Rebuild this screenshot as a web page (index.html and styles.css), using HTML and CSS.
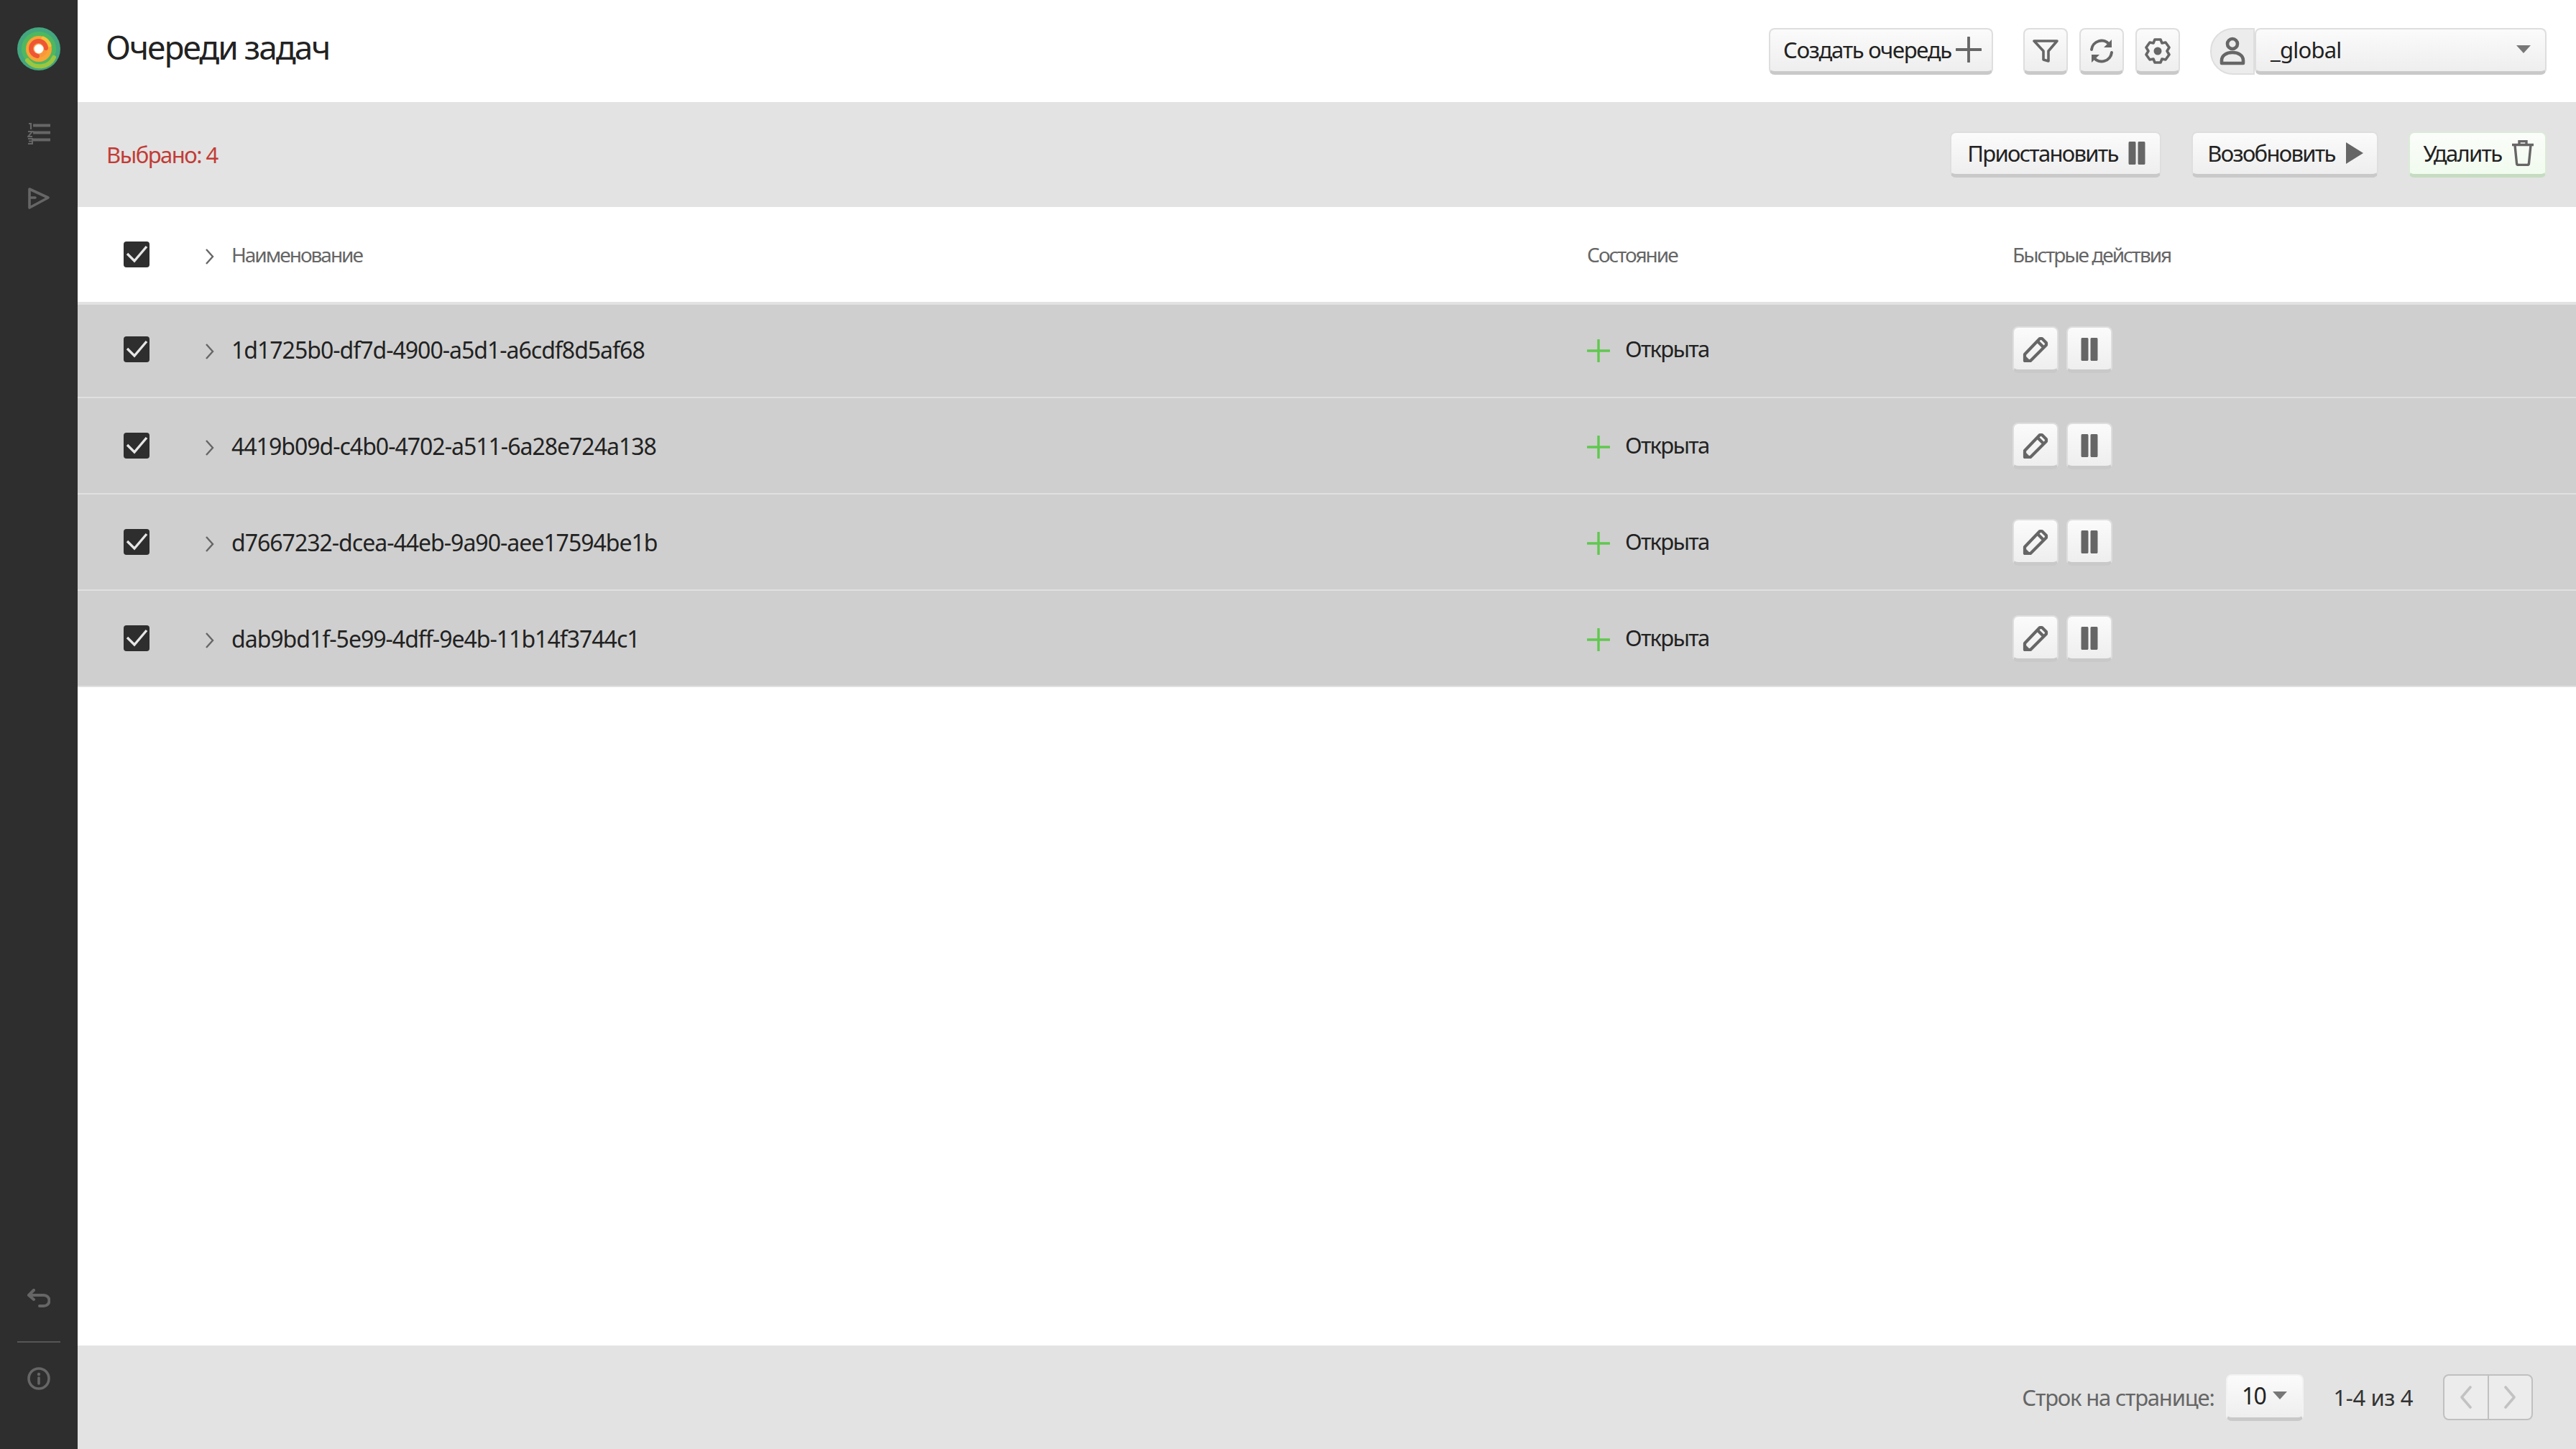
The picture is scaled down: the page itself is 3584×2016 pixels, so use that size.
FILE: index.html
```html
<!DOCTYPE html>
<html>
<head>
    <title>Очереди задач</title>
    <link rel="stylesheet" href="styles.css">
</head>
<body>
    <svg class="sprite" width="0" height="0">
        <symbol id="i-pause" viewBox="0 0 24 32"><rect x="1" y="0" width="9" height="32" rx="1.5"/><rect x="14" y="0" width="9" height="32" rx="1.5"/></symbol>
        <symbol id="i-edit" viewBox="0 0 36 36"><path d="M3 34V25L24 3h3l6 6v3L11 34z" fill="none" stroke-width="4.200" stroke-linejoin="round"/><path d="M3 34v-8l8 8z" stroke="none"/><path d="M21 7l8 8" fill="none" stroke-width="4.200"/></symbol>
        <symbol id="i-chevron" viewBox="0 0 14 22"><path d="M2 1l9 10-9 10" fill="none" stroke-width="2.400"/></symbol>
        <symbol id="i-check" viewBox="0 0 36 36"><rect width="36" height="36" rx="4" fill="#2e2e2e"/><path d="M5 17l10 10L32 7" fill="none" stroke="#e6e6e6" stroke-width="3.400"/></symbol>
        <symbol id="i-plus" viewBox="0 0 32 32"><path d="M16 1v30M1 16h30" fill="none" stroke-width="3.400" stroke-linecap="round"/></symbol>
    </svg>

    <div class="app">
        <nav class="sidebar">
            <svg class="logo" viewBox="0 0 60 60">
                <circle cx="30" cy="30" r="30" fill="#43a67f"/>
                <circle cx="30" cy="30" r="24" fill="#4fb85f"/>
                <path d="M14 46a22 22 0 0 0 37-4" fill="none" stroke="#9cc63f" stroke-width="6" stroke-linecap="round"/>
                <circle cx="30" cy="30" r="18" fill="#f7a535"/>
                <path d="M36 15a16 16 0 0 1 9 10" fill="none" stroke="#f6c33a" stroke-width="5" stroke-linecap="round"/>
                <circle cx="30" cy="30" r="12" fill="#f9973a"/>
                <path d="M28 40a10.500 10.500 0 1 1 12-11" fill="none" stroke="#ee5635" stroke-width="6" stroke-linecap="round"/>
                <circle cx="30" cy="30" r="6.500" fill="#fff"/>
            </svg>
            <svg class="nav-icon nav-list" viewBox="0 0 32 32">
                <path d="M2 2h3v8M8 2" fill="none" stroke-width="2.200"/>
                <path d="M1 13h6l-6 7h6M1 23h6v7H1M2 26.500h5" fill="none" stroke-width="2"/>
                <path d="M8 4.500h24M8 14.500h24M8 24.500h24" fill="none" stroke-width="4"/>
            </svg>
            <svg class="nav-icon nav-send" viewBox="0 0 32 32">
                <path d="M3 3l26 12L3 29z M3 15h8" fill="none" stroke-width="3.600" stroke-linejoin="round" stroke-linecap="round"/>
            </svg>
            <div class="sidebar-bottom">
                <svg class="nav-icon nav-back" viewBox="0 0 32 26">
                    <path d="M9 2L2 9l7 6M2 9h21a7 7 0 0 1 0 15h-6" fill="none" stroke-width="4" stroke-linecap="round" stroke-linejoin="round"/>
                </svg>
                <div class="sidebar-line"></div>
                <svg class="nav-icon nav-info" viewBox="0 0 32 32">
                    <circle cx="16" cy="16" r="14" fill="none" stroke-width="3.600"/>
                    <circle cx="16" cy="10" r="2.200" stroke="none"/>
                    <path d="M16 15v8" fill="none" stroke-width="3.600" stroke-linecap="round"/>
                </svg>
            </div>
        </nav>

        <main class="main">
            <header class="header">
                <h1 class="title">Очереди задач</h1>
                <div class="header-actions">
                    <button class="btn btn-create">Создать очередь
                        <svg class="btn-plus"><use href="#i-plus"/></svg>
                    </button>
                    <div class="icon-group">
                        <button class="btn btn-icon">
                            <svg viewBox="0 0 36 36" class="ico"><path d="M2 4h32L22 18v14l-7-2V18z" fill="none" stroke-width="3.600" stroke-linejoin="round"/></svg>
                        </button>
                        <button class="btn btn-icon">
                            <svg viewBox="0 0 36 36" class="ico">
                                <path d="M4 16a14 14 0 0 1 25-7M32 20a14 14 0 0 1-25 7" fill="none" stroke-width="4" stroke-linecap="round"/>
                                <path d="M32 2v11H21zM4 34V23h11z" stroke="none"/>
                            </svg>
                        </button>
                        <button class="btn btn-icon">
                            <svg viewBox="0 0 36 36" class="ico">
                                <path d="M14 2h8l2 5 5-1 5 7-3 5 3 5-5 7-5-1-2 5h-8l-2-5-5 1-5-7 3-5-3-5 5-7 5 1z" fill="none" stroke-width="3.600" stroke-linejoin="round"/>
                                <circle cx="18" cy="18" r="5.500" stroke="none"/>
                            </svg>
                        </button>
                    </div>
                    <div class="namespace">
                        <span class="namespace-user">
                            <svg viewBox="0 0 36 40" class="ico-user">
                                <circle cx="18" cy="10" r="7" fill="none" stroke-width="4.600"/>
                                <path d="M3 37v-4c0-7 7-11 15-11s15 4 15 11v4z" fill="none" stroke-width="4.600" stroke-linejoin="round"/>
                            </svg>
                        </span>
                        <div class="btn namespace-select">
                            <span>_global</span>
                            <span class="caret"></span>
                        </div>
                    </div>
                </div>
            </header>

            <section class="toolbar">
                <span class="selected-count">Выбрано: 4</span>
                <div class="toolbar-actions">
                    <button class="btn btn-tool btn-pause">Приостановить
                        <svg class="ico-pause"><use href="#i-pause"/></svg>
                    </button>
                    <button class="btn btn-tool btn-resume">Возобновить
                        <svg viewBox="0 0 26 32" class="ico-play"><path d="M1 1l24 15L1 31z" stroke="none"/></svg>
                    </button>
                    <button class="btn btn-tool btn-delete">Удалить
                        <svg viewBox="0 0 32 36" class="ico-trash">
                            <path d="M1 6.500h30M11 5V1.500h10V5" fill="none" stroke-width="3.400"/>
                            <path d="M5 7l2.500 25c0 1.500 1 2.500 2.500 2.500h12c1.500 0 2.500-1 2.500-2.500L27 7" fill="none" stroke-width="3.400"/>
                        </svg>
                    </button>
                </div>
            </section>

            <section class="table">
                <div class="table-row table-head">
                    <svg class="check"><use href="#i-check"/></svg>
                    <svg class="chevron"><use href="#i-chevron"/></svg>
                    <span>Наименование</span>
                    <span>Состояние</span>
                    <span>Быстрые действия</span>
                </div>

                <div class="table-row row-selected">
                    <svg class="check"><use href="#i-check"/></svg>
                    <svg class="chevron"><use href="#i-chevron"/></svg>
                    <span class="queue-name">1d1725b0-df7d-4900-a5d1-a6cdf8d5af68</span>
                    <span class="state"><svg class="state-plus"><use href="#i-plus"/></svg>Открыта</span>
                    <span class="row-actions">
                        <button class="btn btn-row"><svg class="ico-edit"><use href="#i-edit"/></svg></button>
                        <button class="btn btn-row"><svg class="ico-pause"><use href="#i-pause"/></svg></button>
                    </span>
                </div>
                <div class="table-row row-selected">
                    <svg class="check"><use href="#i-check"/></svg>
                    <svg class="chevron"><use href="#i-chevron"/></svg>
                    <span class="queue-name">4419b09d-c4b0-4702-a511-6a28e724a138</span>
                    <span class="state"><svg class="state-plus"><use href="#i-plus"/></svg>Открыта</span>
                    <span class="row-actions">
                        <button class="btn btn-row"><svg class="ico-edit"><use href="#i-edit"/></svg></button>
                        <button class="btn btn-row"><svg class="ico-pause"><use href="#i-pause"/></svg></button>
                    </span>
                </div>
                <div class="table-row row-selected">
                    <svg class="check"><use href="#i-check"/></svg>
                    <svg class="chevron"><use href="#i-chevron"/></svg>
                    <span class="queue-name">d7667232-dcea-44eb-9a90-aee17594be1b</span>
                    <span class="state"><svg class="state-plus"><use href="#i-plus"/></svg>Открыта</span>
                    <span class="row-actions">
                        <button class="btn btn-row"><svg class="ico-edit"><use href="#i-edit"/></svg></button>
                        <button class="btn btn-row"><svg class="ico-pause"><use href="#i-pause"/></svg></button>
                    </span>
                </div>
                <div class="table-row row-selected">
                    <svg class="check"><use href="#i-check"/></svg>
                    <svg class="chevron"><use href="#i-chevron"/></svg>
                    <span class="queue-name">dab9bd1f-5e99-4dff-9e4b-11b14f3744c1</span>
                    <span class="state"><svg class="state-plus"><use href="#i-plus"/></svg>Открыта</span>
                    <span class="row-actions">
                        <button class="btn btn-row"><svg class="ico-edit"><use href="#i-edit"/></svg></button>
                        <button class="btn btn-row"><svg class="ico-pause"><use href="#i-pause"/></svg></button>
                    </span>
                </div>
            </section>

            <footer class="footer">
                <span class="rows-label">Строк на странице:</span>
                <div class="btn rows-select">10<span class="caret"></span></div>
                <span class="range">1-4 из 4</span>
                <div class="pager">
                    <span class="pager-btn"><svg viewBox="0 0 18 32" class="pager-ico"><path d="M15 2L3 16l12 14" fill="none" stroke-width="3.600" stroke-linecap="round" stroke-linejoin="round"/></svg></span>
                    <span class="pager-btn"><svg viewBox="0 0 18 32" class="pager-ico"><path d="M3 2l12 14L3 30" fill="none" stroke-width="3.600" stroke-linecap="round" stroke-linejoin="round"/></svg></span>
                </div>
            </footer>
        </main>
    </div>
</body>
</html>
```

FILE: styles.css
```css
* {
    box-sizing: border-box;
}

html, body {
    height: 100%;
    margin: 0;
}

body {
    font-family: "Noto Sans", "Open Sans", sans-serif;
    font-size: 31px;
    color: #222;
    background-color: #fff;
    overflow: hidden;
}

.sprite {
    display: none;
}

.app {
    display: flex;
    height: 2016px;
}

/* Left rail */
.sidebar {
    width: 108px;
    flex: none;
    display: flex;
    flex-direction: column;
    align-items: center;
    padding-top: 38px;
    background-color: #2e2e2e;
}

.logo {
    width: 60px;
    height: 60px;
}

.nav-icon {
    display: block;
    stroke: #666;
    fill: #666;
}

.nav-list {
    width: 32px;
    height: 32px;
    margin-top: 72px;
}

.nav-send {
    width: 32px;
    height: 32px;
    margin-top: 58px;
}

.sidebar-bottom {
    margin-top: auto;
    padding-bottom: 82px;
    display: flex;
    flex-direction: column;
    align-items: center;
}

.nav-back {
    width: 32px;
    height: 26px;
}

.sidebar-line {
    width: 60px;
    height: 2px;
    margin: 47px 0 34px;
    background-color: #555;
}

.nav-info {
    width: 32px;
    height: 32px;
}

.main {
    flex: 1;
    min-width: 0;
    display: flex;
    flex-direction: column;
}

/* Buttons */
.btn {
    display: inline-flex;
    align-items: center;
    justify-content: center;
    height: 65px;
    padding: 0 0 2px;
    font-family: inherit;
    font-size: 31px;
    letter-spacing: -1.7px;
    color: #222;
    background: linear-gradient(#fbfbfb, #eeeeee);
    border: 2px solid #dedede;
    border-bottom: 5px solid #c9c9c9;
    border-radius: 8px;
}

.btn svg {
    fill: #666;
    stroke: #666;
}

.header {
    height: 142px;
    flex: none;
    display: flex;
    align-items: center;
    justify-content: space-between;
    padding: 0 41px;
}

.title {
    margin: 0 0 12px -2px;
    font-size: 46px;
    font-weight: 400;
    letter-spacing: -2px;
}

.header-actions {
    display: flex;
    align-items: center;
}

.btn-create {
    width: 312px;
    gap: 6px;
    padding-left: 4px;
    letter-spacing: -1.3px;
}

.btn-plus {
    width: 36px;
    height: 36px;
}

.icon-group {
    display: flex;
    gap: 16px;
    margin-left: 42px;
}

.btn-icon {
    width: 62px;
    padding: 2px 0 0;
}

.ico {
    width: 36px;
    height: 36px;
}

.namespace {
    display: flex;
    margin-left: 42px;
}

.namespace-user {
    width: 62px;
    height: 65px;
    display: flex;
    align-items: center;
    justify-content: center;
    background-color: #ececec;
    border: 2px solid #dedede;
    border-radius: 32px 0 0 32px;
}

.ico-user {
    width: 36px;
    height: 40px;
    fill: #666;
    stroke: #666;
}

.namespace-select {
    width: 406px;
    justify-content: space-between;
    padding: 0 20px 2px;
    letter-spacing: -0.8px;
}

.caret {
    width: 0;
    height: 0;
    border-left: 10px solid transparent;
    border-right: 10px solid transparent;
    border-top: 11px solid #777;
}

/* Selection bar */
.toolbar {
    height: 146px;
    flex: none;
    display: flex;
    align-items: center;
    justify-content: space-between;
    padding: 0 41px;
    background-color: #e3e3e3;
}

.selected-count {
    margin-left: -1px;
    color: #c23c36;
    letter-spacing: -1.5px;
}

.toolbar-actions {
    display: flex;
    gap: 42px;
}

.btn-tool {
    height: 64px;
    gap: 14px;
}

.btn-pause {
    width: 294px;
    padding-left: 2px;
}

.btn-resume {
    width: 260px;
    padding-left: 2px;
}

.btn-delete {
    width: 192px;
    padding-left: 4px;
    background: linear-gradient(#fbfdfa, #f1fbee);
    border-color: #dcebd8;
    border-bottom-color: #c6dcc2;
}

.ico-pause {
    width: 24px;
    height: 32px;
}

.ico-play {
    width: 26px;
    height: 32px;
}

.ico-trash {
    width: 32px;
    height: 36px;
}

/* Table */
.table {
    flex: 1;
}

.table-row {
    display: grid;
    grid-template-columns: 36px 114px 1886px 592px 1fr;
    align-items: center;
    padding-left: 64px;
}

.table-head {
    height: 132px;
    font-size: 28px;
    letter-spacing: -2px;
    color: #666;
}

.row-selected {
    height: 134px;
    border-bottom: 2px solid #e0e0e0;
    background-color: #cfcfcf;
    letter-spacing: -1.7px;
}

.row-selected:nth-child(2) {
    box-shadow: inset 0 4px #e2e2e2;
}

.queue-name {
    font-size: 32px;
    letter-spacing: -1px;
}

.check {
    width: 36px;
    height: 36px;
}

.chevron {
    width: 14px;
    height: 22px;
    margin: 6px 0 0 77px;
    stroke: #666;
}

.state {
    display: flex;
    align-items: center;
    gap: 21px;
    margin-top: -2px;
}

.state-plus {
    width: 32px;
    height: 32px;
    margin-top: 6px;
    stroke: #60c84f;
}

.row-actions {
    display: flex;
    gap: 11px;
    margin-top: 1px;
}

.btn-row {
    width: 64px;
    padding: 2px 0 0;
}

.ico-edit {
    width: 36px;
    height: 36px;
}

/* Pagination */
.footer {
    height: 144px;
    flex: none;
    display: flex;
    align-items: center;
    justify-content: flex-end;
    padding-right: 60px;
    background-color: #e3e3e3;
}

.rows-label {
    color: #666;
    letter-spacing: -1.2px;
}

.rows-select {
    width: 108px;
    gap: 10px;
    margin-left: 16px;
    font-size: 32px;
    border-color: #f2f2f2;
    border-bottom-color: #c9c9c9;
}

.range {
    margin-left: 42px;
    letter-spacing: -0.4px;
    color: #333;
}

.pager {
    display: flex;
    width: 125px;
    height: 64px;
    margin-left: 42px;
    background-color: #ececec;
    border: 2px solid #c0c0c0;
    border-radius: 8px;
}

.pager-btn {
    flex: 1;
    display: flex;
    align-items: center;
    justify-content: center;
}

.pager-btn + .pager-btn {
    border-left: 2px solid #c0c0c0;
}

.pager-ico {
    width: 18px;
    height: 32px;
    stroke: #c2c2c2;
}
```
